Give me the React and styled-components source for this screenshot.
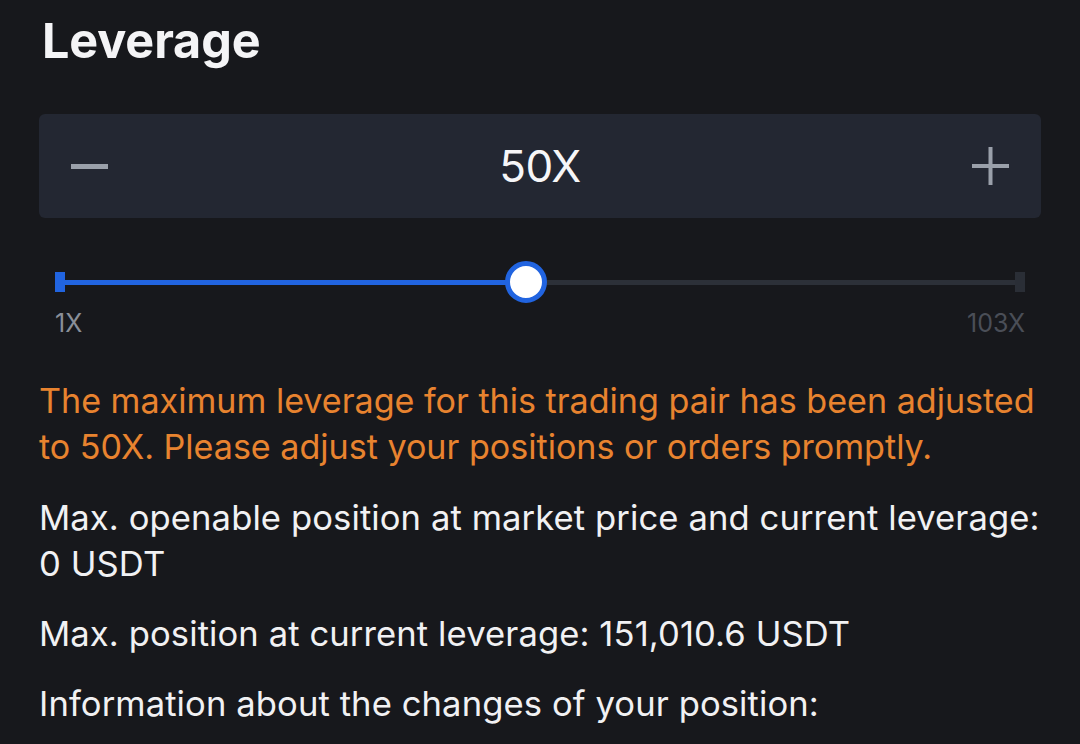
import React from "react";
import styled, { createGlobalStyle } from "styled-components";

const Global = createGlobalStyle`
  html, body { margin: 0; padding: 0; background: #17181c; }
  body { font-family: Inter, "Noto Sans", sans-serif; -webkit-font-smoothing: antialiased; }
`;

const Page = styled.div`
  width: 1080px;
  height: 744px;
  overflow: hidden;
  box-sizing: border-box;
  padding: 11px 39px 0 39px;
  background: #17181c;
  display: flex;
  flex-direction: column;
  & > * { flex-shrink: 0; }
`;

const Title = styled.h1`
  margin: 0 0 0 3px;
  font-size: 48.5px;
  line-height: 59px;
  font-weight: 700;
  color: #f4f4f6;
  letter-spacing: -0.1px;
`;

const Stepper = styled.div`
  margin-top: 44px;
  height: 104px;
  border-radius: 6px;
  background: #232732;
  display: flex;
  align-items: center;
  justify-content: space-between;
  padding: 0 32px;
`;

const StepButton = styled.button`
  border: 0;
  background: transparent;
  padding: 0;
  width: 37px;
  height: 38px;
  display: flex;
  align-items: center;
  justify-content: center;
  color: #9aa0aa;
  cursor: pointer;
`;

const Value = styled.div`
  font-size: 44px;
  font-weight: 400;
  color: #f6f6f8;
  letter-spacing: -0.5px;
`;

const SliderWrap = styled.div`
  margin-top: 43px;
  padding: 0 16px;
`;

const Track = styled.div`
  position: relative;
  height: 42px;
  display: flex;
  align-items: center;
`;

const Rail = styled.div`
  flex: 1;
  height: 5px;
  background: #2c3038;
  display: flex;
`;

const Fill = styled.div`
  height: 100%;
  background: #2164e0;
`;

const Cap = styled.div`
  position: absolute;
  top: 11px;
  width: 10px;
  height: 20px;
  background: ${(p) => (p.$active ? "#2164e0" : "#2a2e36")};
  ${(p) => (p.$end ? "right: 0;" : "left: 0;")}
`;

const Thumb = styled.div`
  position: absolute;
  top: 0;
  width: 42px;
  height: 42px;
  box-sizing: border-box;
  border-radius: 50%;
  border: 5px solid #2164e0;
  background: #ffffff;
  transform: translateX(-50%);
`;

const Labels = styled.div`
  display: flex;
  justify-content: space-between;
  margin-top: 5px;
  font-size: 25px;
  line-height: 30px;
`;

const Label = styled.span`
  color: ${(p) => p.$color};
`;

const Warning = styled.p`
  margin: 40px 0 0 0;
  font-size: 34.1px;
  line-height: 46px;
  color: #e8832f;
`;

const Info = styled.p`
  margin: 24px 0 0 0;
  font-size: 34.6px;
  line-height: 46px;
  color: #f1f1f3;
  letter-spacing: 0.1px;
`;

export default function App() {
  const max = 103;
  const value = 50;
  const pct = (value / max) * 100;
  return (
    <>
      <Global />
      <Page>
        <Title>Leverage</Title>
        <Stepper>
          <StepButton aria-label="decrease">
            <svg width="37" height="38" viewBox="0 0 37 38">
              <rect x="0" y="17" width="37" height="5" fill="currentColor" />
            </svg>
          </StepButton>
          <Value>50X</Value>
          <StepButton aria-label="increase">
            <svg width="37" height="38" viewBox="0 0 37 38">
              <rect x="0" y="17" width="37" height="4" fill="currentColor" />
              <rect x="16.5" y="0" width="4" height="38" fill="currentColor" />
            </svg>
          </StepButton>
        </Stepper>
        <SliderWrap>
          <Track>
            <Rail>
              <Fill style={{ width: `${pct}%` }} />
            </Rail>
            <Cap $active />
            <Cap $end />
            <Thumb style={{ left: `${pct}%` }} />
          </Track>
          <Labels>
            <Label $color="#8a8f98">1X</Label>
            <Label $color="#4a4e57">103X</Label>
          </Labels>
        </SliderWrap>
        <Warning>
          The maximum leverage for this trading pair has been adjusted to 50X.
          Please adjust your positions or orders promptly.
        </Warning>
        <Info>
          Max. openable position at market price and current leverage: 0 USDT
        </Info>
        <Info>Max. position at current leverage: 151,010.6 USDT</Info>
        <Info>Information about the changes of your position:</Info>
      </Page>
    </>
  );
}
